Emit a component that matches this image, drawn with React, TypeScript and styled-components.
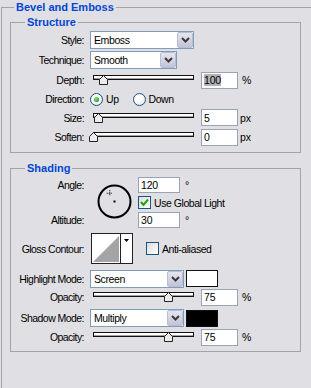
import styled, { createGlobalStyle } from 'styled-components';

const GlobalStyle = createGlobalStyle`
  html, body {
    margin: 0;
    padding: 0;
    background: #e0dfe3;
    overflow: hidden;
  }
  body {
    font-family: "Liberation Sans", Arial, sans-serif;
    font-size: 10.5px;
    color: #000;
  }
`;

const Panel = styled.div`
  width: 311px;
  height: 388px;
  overflow: hidden;
`;

const Outer = styled.fieldset`
  margin: 0 0 0 1px;
  padding: 1px 0 60px 8px;
  width: 330px;
  border: 1px solid #a3a3a7;
  border-bottom: none;
`;

const Section = styled.fieldset<{ $mt?: number }>`
  margin: ${(p) => p.$mt ?? 0}px 0 0 0;
  padding: 1px 0 5px 0;
  width: 289px;
  border: 1px solid #a3a3a7;
`;

const Legend = styled.legend<{ $indent: number }>`
  margin-left: ${(p) => p.$indent}px;
  padding: 0 2px;
  font-size: 11px;
  font-weight: bold;
  line-height: 14px;
  color: #0046d5;
`;

const Row = styled.div<{ $h: number; $mt?: number }>`
  display: flex;
  align-items: center;
  height: ${(p) => p.$h}px;
  margin-top: ${(p) => p.$mt ?? 0}px;
`;

const Label = styled.span`
  flex: none;
  width: 73px;
  margin-right: 6px;
  text-align: right;
  letter-spacing: -0.55px;
  white-space: nowrap;
`;

const Select = styled.div<{ $w: number }>`
  box-sizing: border-box;
  width: ${(p) => p.$w}px;
  height: 18px;
  border: 1px solid #7f9db9;
  background: #fff;
  display: flex;
  align-items: center;
  flex: none;
`;

const SelectValue = styled.span`
  flex: 1;
  padding-left: 3px;
  letter-spacing: -0.4px;
`;

const SelectButton = styled.span`
  box-sizing: border-box;
  width: 16px;
  height: 16px;
  border: 1px solid #b4c0d8;
  border-radius: 2px;
  background: linear-gradient(#e6e5ee, #c4c3d6);
  display: flex;
  align-items: center;
  justify-content: center;
`;

const Field = styled.div<{ $w: number; $h?: number }>`
  box-sizing: border-box;
  width: ${(p) => p.$w}px;
  height: ${(p) => p.$h ?? 17}px;
  border: 1px solid #98a4b6;
  background: #fff;
  display: flex;
  align-items: center;
  padding-left: 2px;
  letter-spacing: -0.2px;
  flex: none;
`;

const Selected = styled.span`
  background: #b3b3b7;
  line-height: 12px;
`;

const Unit = styled.span<{ $gap: number }>`
  margin-left: ${(p) => p.$gap}px;
`;

const SliderWrap = styled.div`
  position: relative;
  flex: none;
  width: 101px;
  height: 10px;
  margin: 0 7px 0 3px;
`;

const Track = styled.div`
  box-sizing: border-box;
  height: 5px;
  border: 1px solid #111;
  background: #fff;
  box-shadow: inset 0 -1px 0 #a0a0a0;
`;

const Thumb = styled.svg`
  position: absolute;
  top: 0;
  width: 9px;
  height: 10px;
  margin-left: -4.5px;
`;

const Choice = styled.label<{ $ml?: number }>`
  display: flex;
  align-items: center;
  gap: 3px;
  margin-left: ${(p) => p.$ml ?? 0}px;
`;

const RadioDot = styled.span<{ $on?: boolean }>`
  box-sizing: border-box;
  width: 13px;
  height: 13px;
  border-radius: 50%;
  border: 1px solid #1c5180;
  background: radial-gradient(circle at 40% 35%, #fff 30%, #dcdcd6);
  display: flex;
  align-items: center;
  justify-content: center;
  &::after {
    content: '';
    display: ${(p) => (p.$on ? 'block' : 'none')};
    width: 5px;
    height: 5px;
    border-radius: 50%;
    background: radial-gradient(circle at 40% 35%, #8ee58e, #21a121 70%);
  }
`;

const Box = styled.span`
  box-sizing: border-box;
  width: 13px;
  height: 13px;
  border: 1px solid #1c5180;
  background: linear-gradient(135deg, #dcdcd6, #fff);
  display: flex;
  align-items: center;
  justify-content: center;
  flex: none;
`;

const Text = styled.span`
  letter-spacing: -0.45px;
  white-space: nowrap;
`;

const DialGrid = styled.div`
  display: grid;
  grid-template-columns: 79px 34px auto;
  grid-template-rows: 18px 17px 18px;
  column-gap: 7px;
  align-items: center;
`;

const DialLabel = styled(Label)<{ $row: number }>`
  grid-column: 1;
  grid-row: ${(p) => p.$row};
`;

const DialCell = styled.svg`
  grid-column: 2;
  grid-row: 1 / 4;
  align-self: start;
  margin-top: 8px;
  width: 35px;
  height: 35px;
`;

const DialControl = styled.div<{ $row: number }>`
  grid-column: 3;
  grid-row: ${(p) => p.$row};
  display: flex;
  align-items: center;
`;

const Contour = styled.div`
  box-sizing: border-box;
  display: flex;
  width: 42px;
  height: 31px;
  margin-left: 1px;
  border: 1px solid #222;
  background: #fff;
  flex: none;
`;

const ContourCurve = styled.svg`
  width: 28px;
  height: 29px;
  border-right: 1px solid #222;
`;

const ContourArrow = styled.div`
  flex: 1;
  display: flex;
  justify-content: center;
  padding-top: 5px;
`;

const Swatch = styled.div<{ $color: string }>`
  box-sizing: border-box;
  width: 32px;
  height: 17px;
  margin-left: 2px;
  border: 1px solid #111;
  background: ${(p) => p.$color};
  flex: none;
`;

const Chevron = () => (
  <svg width="9" height="6" viewBox="0 0 9 6">
    <polyline points="1,1 4.5,4.5 8,1" fill="none" stroke="#3a3a3a" strokeWidth="2" />
  </svg>
);

const Dropdown = ({ w, value }: { w: number; value: string }) => (
  <Select $w={w}>
    <SelectValue>{value}</SelectValue>
    <SelectButton>
      <Chevron />
    </SelectButton>
  </Select>
);

const Slider = ({ pct }: { pct: number }) => (
  <SliderWrap>
    <Track />
    <Thumb viewBox="0 0 9 10" style={{ left: `${pct}%` }}>
      <polygon points="4.5,0.5 8.5,4.5 8.5,9.5 0.5,9.5 0.5,4.5" fill="#ececec" stroke="#222" strokeWidth="1" />
    </Thumb>
  </SliderWrap>
);

const Check = () => (
  <svg width="9" height="9" viewBox="0 0 9 9">
    <polyline points="1,4 3.5,7 8,1.5" fill="none" stroke="#21a121" strokeWidth="2" />
  </svg>
);

const SliderRow = ({
  label,
  pct,
  value,
  unit,
  h,
  mt,
  selected,
}: {
  label: string;
  pct: number;
  value: string;
  unit: string;
  h: number;
  mt?: number;
  selected?: boolean;
}) => (
  <Row $h={h} $mt={mt}>
    <Label>{label}</Label>
    <Slider pct={pct} />
    <Field $w={37}>{selected ? <Selected>{value}</Selected> : value}</Field>
    <Unit $gap={unit === '%' ? 4 : 2}>{unit}</Unit>
  </Row>
);

const angle = 120;
const rad = (angle * Math.PI) / 180;
const cx = 17.5 + Math.cos(rad) * 9.5;
const cy = 17.5 - Math.sin(rad) * 9.5;

export default function App() {
  return (
    <Panel>
      <GlobalStyle />
      <Outer>
        <Legend $indent={4}>Bevel and Emboss</Legend>
        <Section>
          <Legend $indent={14}>Structure</Legend>
          <Row $h={20}>
            <Label>Style:</Label>
            <Dropdown w={104} value="Emboss" />
          </Row>
          <Row $h={20}>
            <Label>Technique:</Label>
            <Dropdown w={87} value="Smooth" />
          </Row>
          <SliderRow label="Depth:" pct={10} value="100" unit="%" h={20} selected />
          <Row $h={18}>
            <Label>Direction:</Label>
            <Choice>
              <RadioDot $on />
              <Text>Up</Text>
            </Choice>
            <Choice $ml={14}>
              <RadioDot />
              <Text>Down</Text>
            </Choice>
          </Row>
          <SliderRow label="Size:" pct={5} value="5" unit="px" h={19} />
          <SliderRow label="Soften:" pct={0} value="0" unit="px" h={20} />
        </Section>

        <Section $mt={8}>
          <Legend $indent={14}>Shading</Legend>
          <DialGrid>
            <DialLabel $row={1}>Angle:</DialLabel>
            <DialCell viewBox="0 0 35 35">
              <circle cx="17.5" cy="17.5" r="16" fill="none" stroke="#000" strokeWidth="2" />
              <rect x="16.5" y="16.5" width="2" height="2" fill="#000" />
              <g stroke="#000" strokeWidth="1" strokeDasharray="1 1">
                <line x1={cx - 3} y1={cy} x2={cx + 3} y2={cy} />
                <line x1={cx} y1={cy - 3} x2={cx} y2={cy + 3} />
              </g>
            </DialCell>
            <DialControl $row={1}>
              <Field $w={42} $h={16}>120</Field>
              <Unit $gap={5}>°</Unit>
            </DialControl>
            <DialControl $row={2}>
              <Choice>
                <Box>
                  <Check />
                </Box>
                <Text>Use Global Light</Text>
              </Choice>
            </DialControl>
            <DialLabel $row={3}>Altitude:</DialLabel>
            <DialControl $row={3}>
              <Field $w={42} $h={16}>30</Field>
              <Unit $gap={5}>°</Unit>
            </DialControl>
          </DialGrid>

          <Row $h={31} $mt={4}>
            <Label>Gloss Contour:</Label>
            <Contour>
              <ContourCurve viewBox="0 0 28 29">
                <polygon points="1,28 27,2 27,28" fill="#a4a4a6" />
              </ContourCurve>
              <ContourArrow>
                <svg width="5" height="3" viewBox="0 0 5 3">
                  <polygon points="0,0 5,0 2.5,3" fill="#000" />
                </svg>
              </ContourArrow>
            </Contour>
            <Choice $ml={13}>
              <Box />
              <Text>Anti-aliased</Text>
            </Choice>
          </Row>

          <Row $h={19} $mt={5}>
            <Label>Highlight Mode:</Label>
            <Dropdown w={94} value="Screen" />
            <Swatch $color="#fff" />
          </Row>
          <SliderRow label="Opacity:" pct={75} value="75" unit="%" h={18} />
          <Row $h={20} $mt={2}>
            <Label>Shadow Mode:</Label>
            <Dropdown w={94} value="Multiply" />
            <Swatch $color="#000" />
          </Row>
          <SliderRow label="Opacity:" pct={75} value="75" unit="%" h={18} />
        </Section>
      </Outer>
    </Panel>
  );
}
